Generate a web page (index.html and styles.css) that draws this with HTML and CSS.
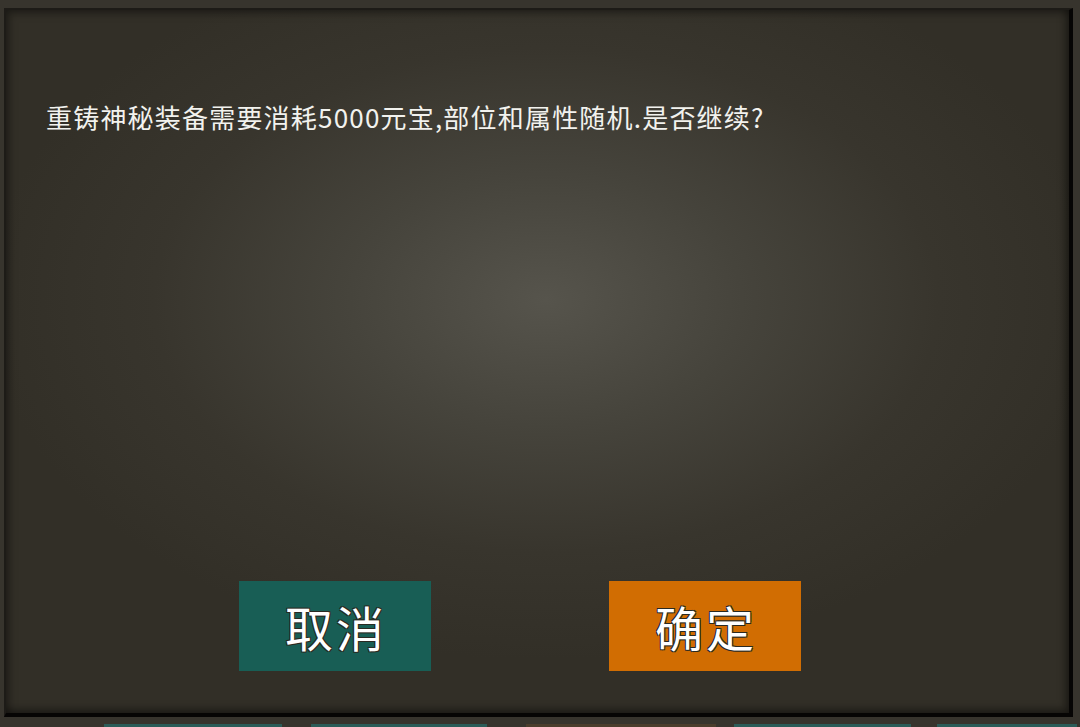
FILE: index.html
```html
<!DOCTYPE html>
<html lang="zh-CN">
<head>
<meta charset="utf-8">
<link rel="stylesheet" href="styles.css">
</head>
<body>
<div class="screen">
  <div class="panel">
    <p class="message">重铸神秘装备需要消耗5000元宝,部位和属性随机.是否继续?</p>
    <div class="actions">
      <button class="btn btn-cancel">取消</button>
      <button class="btn btn-ok">确定</button>
    </div>
  </div>
  <div class="under">
    <span class="seg seg-a"></span>
    <span class="seg seg-b"></span>
    <span class="seg seg-c"></span>
    <span class="seg seg-b2"></span>
    <span class="seg seg-d"></span>
  </div>
</div>
</body>
</html>
```
FILE: styles.css
```css
html, body {
  margin: 0;
  padding: 0;
  width: 1080px;
  height: 727px;
  overflow: hidden;
  background: #37342d;
}
.screen {
  width: 1080px;
  height: 727px;
  box-sizing: border-box;
  padding: 8px 7px 0 4px;
  display: flex;
  flex-direction: column;
}
.panel {
  height: 709px;
  box-sizing: border-box;
  border-top: 2px solid #1d1b17;
  border-left: 2px solid #1d1b17;
  border-right: 4px solid #060504;
  border-bottom: 4px solid #060504;
  background: radial-gradient(ellipse 560px 360px at 540px 290px, #56544c 0%, #46443c 35%, #38352d 70%, #322f27 100%);
  box-shadow: inset 3px 3px 8px rgba(0,0,0,0.35), inset -3px -3px 8px rgba(0,0,0,0.45);
  display: flex;
  flex-direction: column;
  font-family: "Noto Sans CJK SC", "Noto Sans", sans-serif;
}
.message {
  margin: 0;
  padding: 91px 0 0 40px;
  color: #f2f2ee;
  font-size: 26px;
  line-height: 32px;
  letter-spacing: 1.2px;
}
.actions {
  margin-top: auto;
  margin-bottom: 42px;
  display: flex;
  justify-content: center;
  gap: 178px;
  padding-right: 36px;
}
.btn {
  width: 192px;
  height: 90px;
  border: 0;
  padding: 0;
  margin: 0;
  font-family: "Noto Sans CJK SC", "Noto Sans", sans-serif;
  font-size: 48px;
  color: #ffffff;
  line-height: 90px;
  letter-spacing: 3px;
  text-indent: 3px;
  text-shadow: -1px -1px 0 #2a2a22, 1px -1px 0 #2a2a22, -1px 1px 0 #2a2a22, 1px 1px 0 #2a2a22;
}
.btn-cancel { background: #185e55; }
.btn-ok { background: #d16d02; }
.under {
  flex: 1;
  position: relative;
}
.seg {
  position: absolute;
  bottom: 0;
  height: 3px;
}
.seg-a { left: 100px; width: 178px; background: #2b5c58; }
.seg-b { left: 307px; width: 176px; background: #2b5c58; }
.seg-c { left: 522px; width: 190px; background: #4b3d2c; }
.seg-b2 { left: 730px; width: 177px; background: #2b5c58; }
.seg-d { left: 933px; width: 140px; background: #2b5c58; }
```
